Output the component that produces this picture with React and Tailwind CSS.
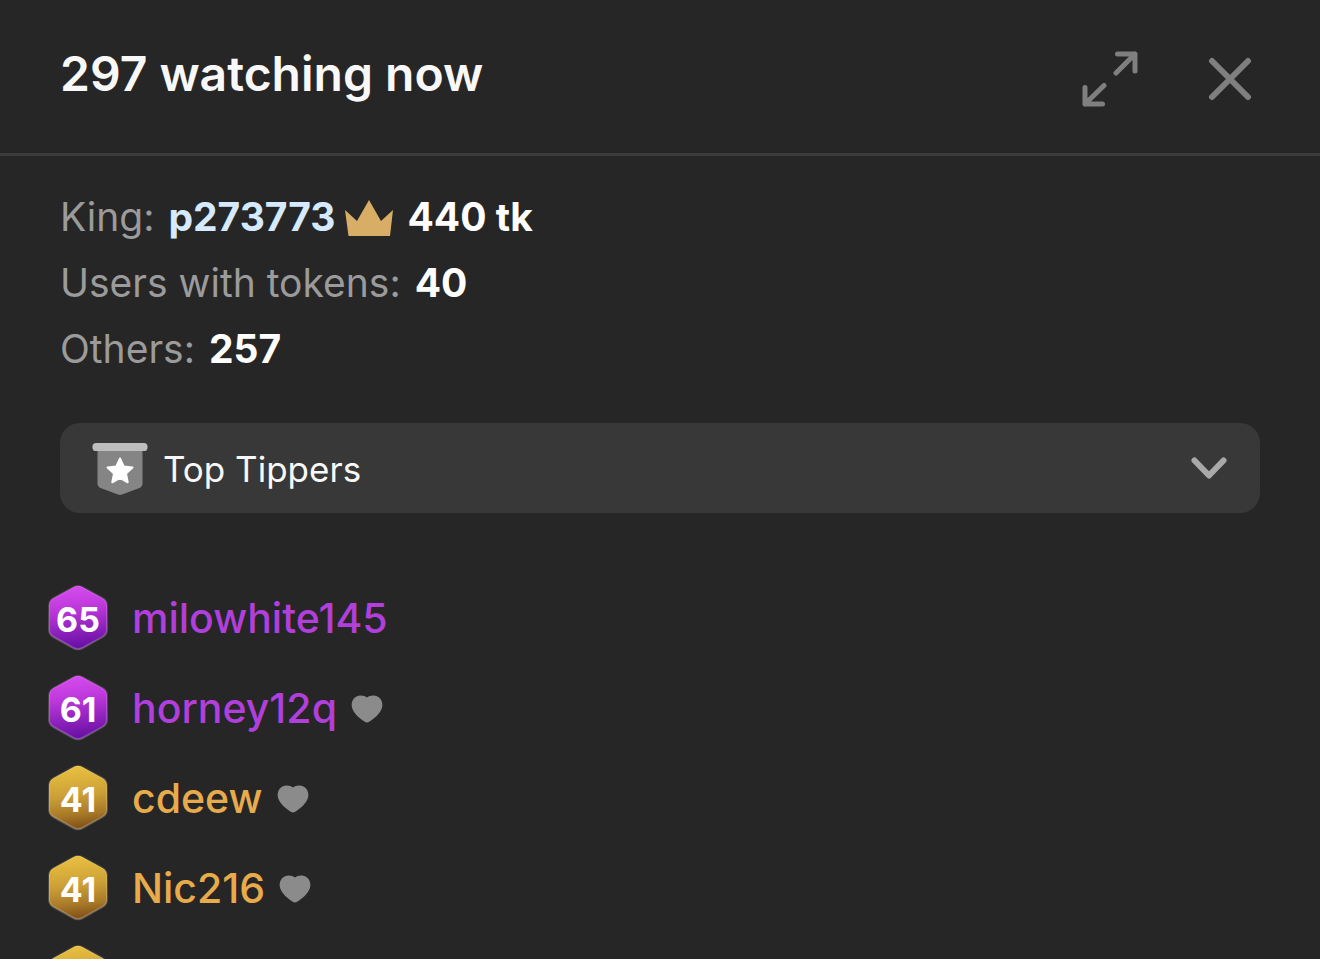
const tippers = [
  { level: 65, name: 'milowhite145', tone: 'purple' },
  { level: 61, name: 'horney12q', tone: 'purple', fan: true },
  { level: 41, name: 'cdeew', tone: 'gold', fan: true },
  { level: 41, name: 'Nic216', tone: 'gold', fan: true },
  { tone: 'gold' },
];

const nameColors = {
  purple: 'text-[#b13fdc]',
  gold: 'text-[#e8ab4c]',
};

function ExpandIcon() {
  return (
    <svg className="w-14 h-14" viewBox="0 0 56 56" fill="none" stroke="currentColor" strokeWidth="5" strokeLinecap="round" strokeLinejoin="round" aria-hidden="true">
      <path d="M35.5 3H53V20M53 3L34 22" />
      <path d="M3 36.5V53H20.5M3 53L22 34.5" />
    </svg>
  );
}

function CloseIcon() {
  return (
    <svg className="w-11 h-11" viewBox="0 0 44 44" fill="none" stroke="currentColor" strokeWidth="6" strokeLinecap="round" aria-hidden="true">
      <path d="M4 4L40 40M40 4L4 40" />
    </svg>
  );
}

function CrownIcon() {
  return (
    <svg className="w-12 h-9" viewBox="0 0 48 36" fill="#d8ae66" aria-hidden="true">
      <path d="M0 10L12 21L24 0L36 21L48 10L45 36H3.5Z" />
    </svg>
  );
}

function PennantIcon() {
  return (
    <svg className="w-14 h-[52px]" viewBox="0 0 56 52" aria-hidden="true">
      <path d="M5.5 5H50.5V40Q50.5 43.5 47.5 45L30 51.5Q28 52.3 26 51.5L8.5 45Q5.5 43.5 5.5 40Z" fill="#858585" />
      <rect x="0.5" y="0" width="55" height="8" rx="3.6" fill="#bdbdbd" />
      <path d="M28 15.5L31.7 23.5L40.5 24.6L34 30.6L35.7 39.3L28 35L20.3 39.3L22 30.6L15.5 24.6L24.3 23.5Z" fill="#fff" stroke="#fff" strokeWidth="2" strokeLinejoin="round" />
    </svg>
  );
}

function ChevronIcon() {
  return (
    <svg className="w-9 h-6" viewBox="0 0 36 24" fill="none" stroke="#a9a9a9" strokeWidth="6" strokeLinecap="round" strokeLinejoin="round" aria-hidden="true">
      <path d="M3.5 4.5L18 19.5L32.5 4.5" />
    </svg>
  );
}

function HeartIcon() {
  return (
    <svg className="w-8 h-7" viewBox="0 0 32 28" fill="#8b8b8b" aria-hidden="true">
      <path d="M16 2.6C13.5 0.3 8.5-0.2 5 1.8C1 4.2-0.2 9 1.2 13.2C3 18.7 8.8 23.5 13.8 26.8Q16 28.2 18.2 26.8C23.2 23.5 29 18.7 30.8 13.2C32.2 9 31 4.2 27 1.8C23.5-0.2 18.5 0.3 16 2.6Z" />
    </svg>
  );
}

// shared gradients, referenced by every badge
function BadgeGradients() {
  return (
    <svg className="absolute w-0 h-0" aria-hidden="true">
      <defs>
        <linearGradient id="badge-purple" x1="0" y1="0" x2="0.1" y2="1">
          <stop offset="0" stopColor="#d94ff0" />
          <stop offset="0.4" stopColor="#bd38db" />
          <stop offset="1" stopColor="#6a10a4" />
        </linearGradient>
        <linearGradient id="badge-gold" x1="0" y1="0" x2="0.1" y2="1">
          <stop offset="0" stopColor="#ecc441" />
          <stop offset="0.5" stopColor="#cca037" />
          <stop offset="0.8" stopColor="#a87a28" />
          <stop offset="1" stopColor="#85551a" />
        </linearGradient>
        <linearGradient id="badge-edge" x1="0" y1="0" x2="0" y2="1">
          <stop offset="0" stopColor="#fff" stopOpacity="0.08" />
          <stop offset="1" stopColor="#fff" stopOpacity="0.25" />
        </linearGradient>
      </defs>
    </svg>
  );
}

function LevelBadge({ level, tone }) {
  return (
    <span className="relative flex items-center justify-center w-[60px] h-[66px] shrink-0">
      <svg className="absolute inset-0 w-full h-full" viewBox="0 0 60 66" aria-hidden="true">
        <path
          d="M25.5 2Q30 -0.4 34.5 2L54.5 13Q59 15.6 59 20.5V44.5Q59 49.4 54.5 52L34.5 63Q30 65.4 25.5 63L5.5 52Q1 49.4 1 44.5V20.5Q1 15.6 5.5 13Z"
          fill={tone === 'purple' ? 'url(#badge-purple)' : 'url(#badge-gold)'}
          stroke="url(#badge-edge)"
          strokeWidth="2"
        />
      </svg>
      <span className="relative pt-1 text-[34px] leading-10 font-bold text-white">{level}</span>
    </span>
  );
}

function Stat({ label, children }) {
  return (
    <div className="flex items-center gap-3.5">
      <dt className="text-[#9b9b9b]">{label}</dt>
      <dd className="flex items-center font-bold text-white">{children}</dd>
    </div>
  );
}

function Header() {
  return (
    <header className="flex items-center justify-between h-[156px] shrink-0 pl-[60px] pr-[68px] pb-1.5 border-b-3 border-[#3b3b3b]">
      <h1 className="text-5xl font-semibold text-[#f8f8f8]">297 watching now</h1>
      <div className="flex items-center gap-[70px] pt-2.5 text-[#7f7f7f]">
        <button type="button" aria-label="Expand">
          <ExpandIcon />
        </button>
        <button type="button" aria-label="Close">
          <CloseIcon />
        </button>
      </div>
    </header>
  );
}

export default function App() {
  return (
    <main className="flex flex-col h-screen overflow-hidden bg-[#262626] font-['Inter',sans-serif]">
      <BadgeGradients />
      <Header />

      <dl className="px-[60px] pt-7 text-[39px] leading-[66px]">
        <Stat label="King:">
          <span className="text-[#d6eaff]">p273773</span>
          <span className="pl-2.5 pr-3.5 pt-0.5">
            <CrownIcon />
          </span>
          440 tk
        </Stat>
        <Stat label="Users with tokens:">40</Stat>
        <Stat label="Others:">257</Stat>
      </dl>

      <div className="relative mx-[60px] mt-[41px]">
        <span className="absolute left-8 top-5 pointer-events-none">
          <PennantIcon />
        </span>
        <select
          aria-label="Sort users by"
          className="block w-full h-[90px] pl-[103px] pr-20 pt-0.5 appearance-none rounded-[20px] bg-[#383838] text-[35px] text-[#f8f8f8]"
        >
          <option>Top Tippers</option>
        </select>
        <span className="absolute right-[33px] top-[33px] pointer-events-none">
          <ChevronIcon />
        </span>
      </div>

      <ul className="px-12 pt-[60px]">
        {tippers.map((user, i) => (
          <li key={i} className="flex items-center h-[90px]">
            <LevelBadge level={user.level} tone={user.tone} />
            <span className={`pl-6 pr-3.5 text-[41px] leading-[60px] font-medium ${nameColors[user.tone]}`}>{user.name}</span>
            {user.fan && (
              <span className="pt-0.5">
                <HeartIcon />
              </span>
            )}
          </li>
        ))}
      </ul>
    </main>
  );
}
